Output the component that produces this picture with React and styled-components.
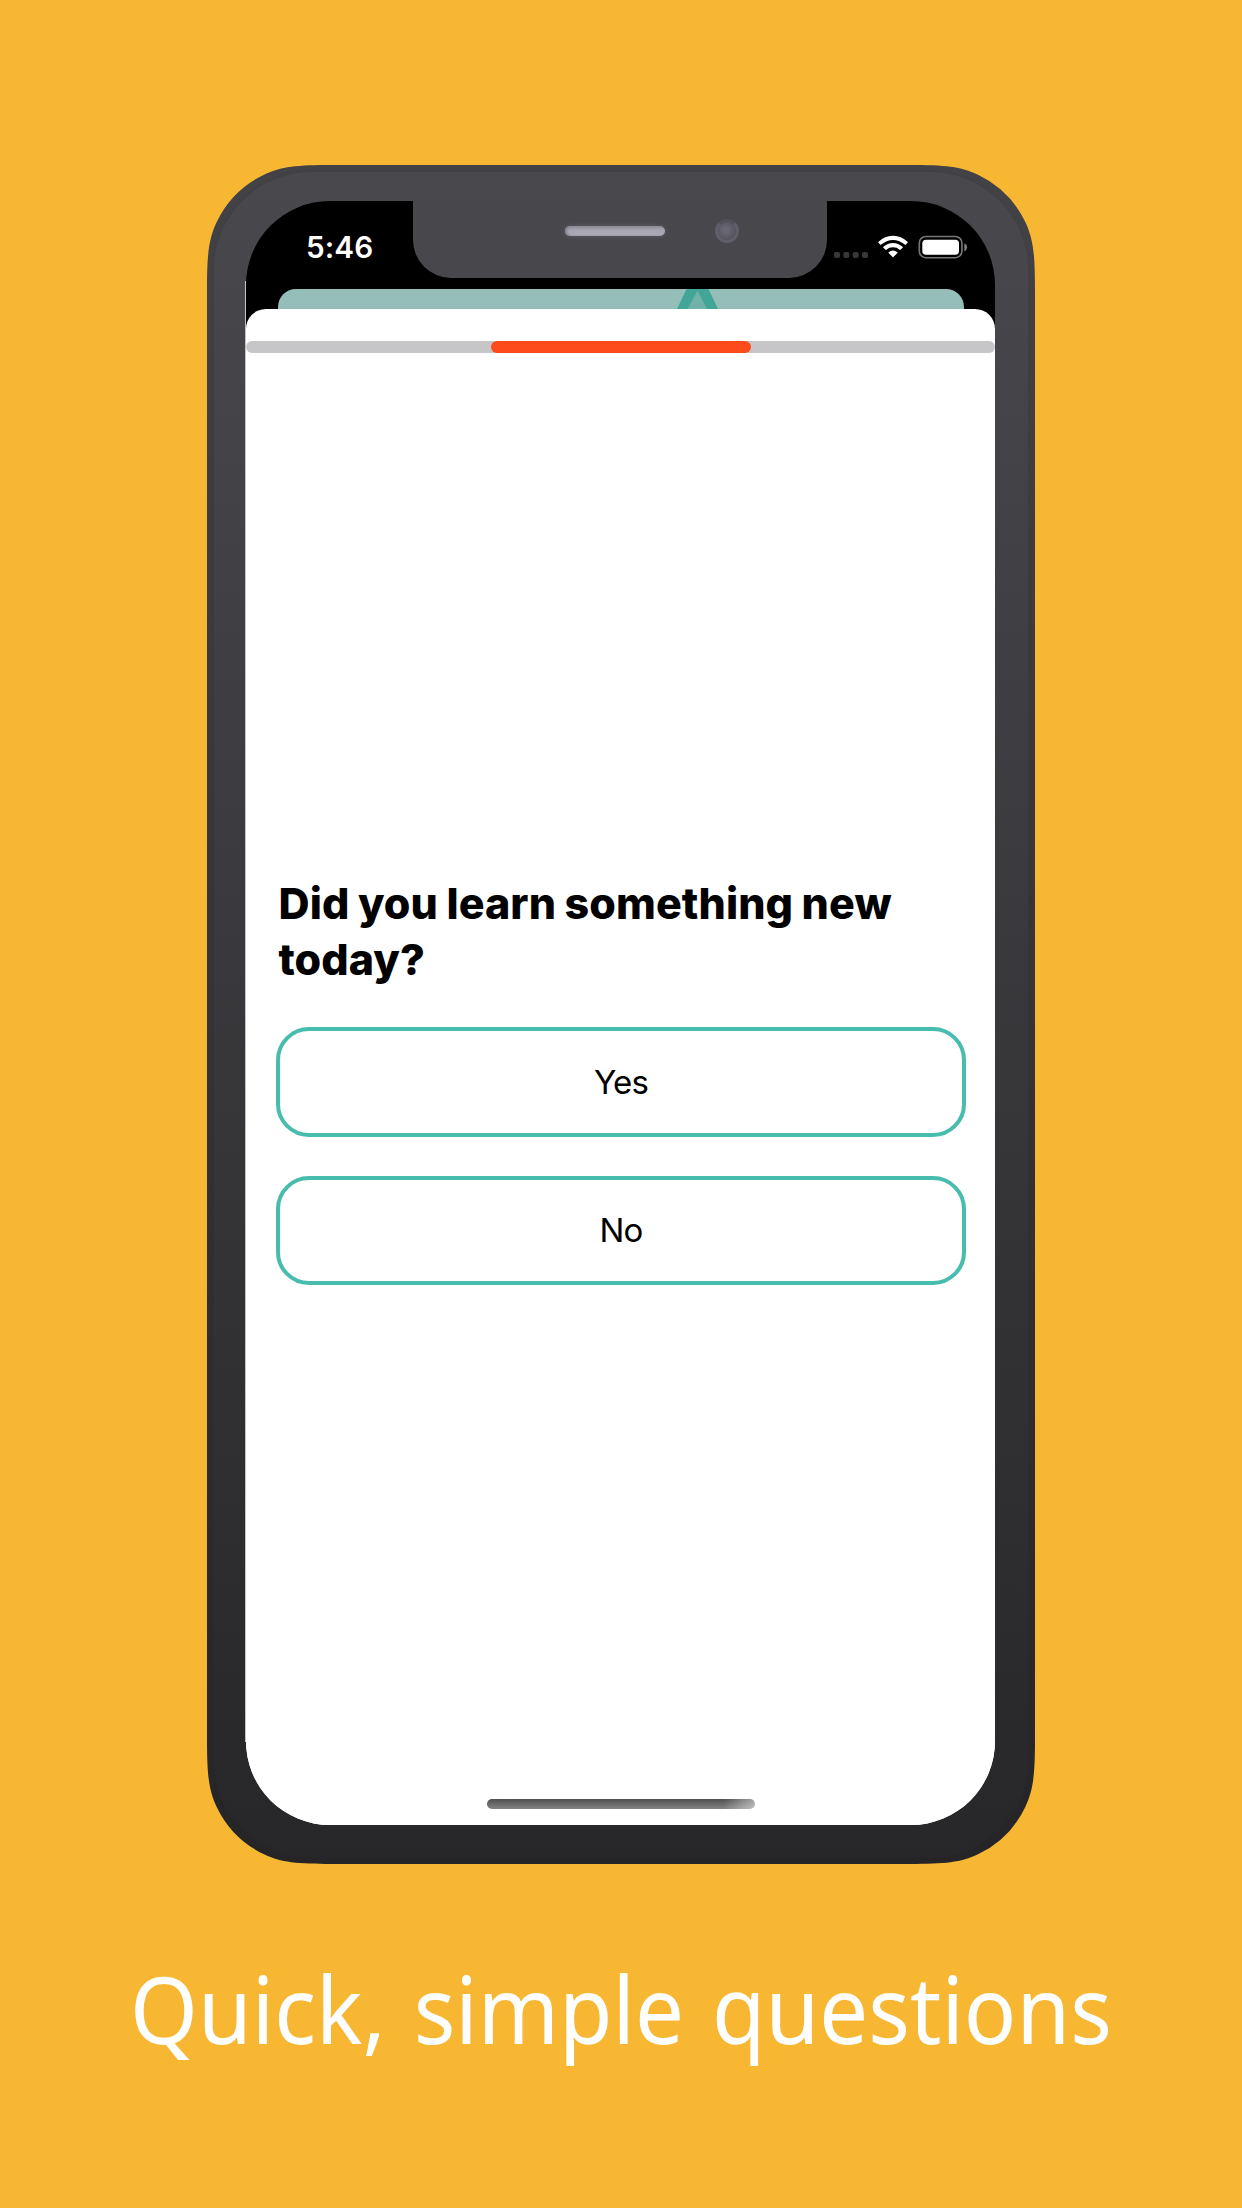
import React from "react";
import styled, { createGlobalStyle } from "styled-components";

const GlobalStyle = createGlobalStyle`
  * { box-sizing: border-box; }
  body { margin: 0; background: #f7b733; }
`;

const Poster = styled.main`
  width: 1242px;
  height: 2208px;
  padding-top: 165px;
  overflow: hidden;
  display: flex;
  flex-direction: column;
  align-items: center;
  background: #f7b733;
  font-family: Inter, "Liberation Sans", sans-serif;
`;

const Phone = styled.section`
  flex: none;
  position: relative;
  width: 828px;
  height: 1699px;
  padding: 36px 40px 39px 39px;
  background: linear-gradient(#434247, #252527);
  clip-path: path("M0 125C0 90 1.5 74.2 9.7 57A100 100 0 0 1 57 9.7C74.2 1.5 90 0 125 0H703C738 0 753.8 1.5 771 9.7A100 100 0 0 1 818.3 57C826.5 74.2 828 90 828 125V1574C828 1609 826.5 1624.8 818.3 1642A100 100 0 0 1 771 1689.3C753.8 1697.5 738 1699 703 1699H125C90 1699 74.2 1697.5 57 1689.3A100 100 0 0 1 9.7 1642C1.5 1624.8 0 1609 0 1574Z");

  &::before {
    content: "";
    position: absolute;
    inset: 7px;
    border-radius: 98px;
    background: linear-gradient(#49484d, #272729);
    box-shadow: 0 0 3px #39383d55;
  }

  &::after {
    content: "";
    position: absolute;
    left: 38px;
    top: 116px;
    bottom: 122px;
    width: 1px;
    background: #c4c4c6;
  }
`;

const Screen = styled.div`
  position: relative;
  height: 100%;
  display: flex;
  flex-direction: column;
  align-items: center;
  overflow: hidden;
  border-radius: 84px;
  background: linear-gradient(#000 0 140px, #fff 140px);
`;

const StatusBar = styled.header`
  width: 100%;
  height: 88px;
  flex: none;
  display: flex;
  justify-content: space-between;
`;

const Time = styled.time`
  width: 167px;
  padding: 28px 0 0 60px;
  color: #fff;
  font-size: 29.7px;
  line-height: 36px;
  font-weight: 570;
  letter-spacing: 0.1px;
`;

const Notch = styled.div`
  width: 414px;
  height: 77px;
  display: flex;
  align-items: flex-start;
  padding: 18px 0 0 152px;
  gap: 50px;
  border-radius: 0 0 38px 38px;
  background: #48474c;
`;

const Speaker = styled.span`
  width: 100px;
  height: 10px;
  margin-top: 7px;
  border-radius: 5px;
  background: linear-gradient(#8d8c96, #a7a6b1 45%, #acabb6);
  box-shadow: 0 0 4px #63626a, inset 2px 0 2px #85848d;
`;

const Camera = styled.span`
  width: 24px;
  height: 24px;
  border: 3px solid #5f5e69;
  border-top-color: #52515a;
  border-radius: 50%;
  background: radial-gradient(circle at 45% 45%, #686774 15%, #565560 65%, #4e4d57);
`;

const StatusIcons = styled.div`
  width: 168px;
  padding: 33px 0 0 6px;
`;

const SheetStack = styled.div`
  width: 100%;
  flex: 1;
  display: flex;
  flex-direction: column;
  align-items: center;
`;

const BackSheet = styled.div`
  width: 686px;
  height: 20px;
  flex: none;
  margin-left: 1px;
  overflow: hidden;
  border-radius: 18px 18px 0 0;
  background: #96beb9;

  svg { display: block; margin-left: 399px; }
`;

const Sheet = styled.div`
  width: 100%;
  flex: 1;
  display: flex;
  flex-direction: column;
  align-items: center;
  padding-top: 32px;
  border-radius: 20px 20px 0 0;
  background: #fff;
`;

const Track = styled.div`
  width: 100%;
  height: 12px;
  flex: none;
  display: flex;
  justify-content: center;
  padding-left: 1px;
  border-radius: 6px;
  background: #c6c6c8;
`;

const Progress = styled.div`
  width: 260px;
  border-radius: 6px;
  background: #fe4b1b;
`;

const Question = styled.h1`
  width: 690px;
  margin: 522px 0 0 1px;
  padding-left: 2.5px;
  color: #000;
  font-size: 43px;
  line-height: 56px;
  font-weight: 800;
  letter-spacing: 0.08px;
  word-spacing: -1px;
  white-space: pre-line;
`;

const Answers = styled.div`
  display: flex;
  flex-direction: column;
  gap: 39px;
  margin: 40px 0 0 1px;
`;

const Answer = styled.button`
  width: 690px;
  height: 109.5px;
  padding: 0;
  border: 4px solid #49bdad;
  border-radius: 33px;
  background: #fff;
  color: #000;
  font: 400 33px/40px Inter, "Liberation Sans", sans-serif;
  letter-spacing: -0.9px;
`;

const HomeIndicator = styled.div`
  width: 268px;
  height: 10px;
  margin: auto 0 16px 1px;
  border-radius: 5px;
  background:
    linear-gradient(100deg, transparent 88%, #ffffff80 100%),
    linear-gradient(#505050, #838383);
`;

const Caption = styled.p`
  margin: 79px 0 0;
  color: #fff;
  font: 400 93px/130px "Noto Sans", "Open Sans", sans-serif;
  word-spacing: 5.8px;
  white-space: nowrap;
  transform: scaleX(0.935);
`;

const Indicators = () => (
  <svg width="136" height="26" viewBox="0 0 136 26" fill="none">
    {[0, 9.3, 18.7, 28].map((x) => (
      <rect key={x} x={x + 1} y="18" width="6" height="6" rx="2" fill="#38383a" />
    ))}
    <path
      d="M45.3 8.6Q45.1 8.2 45.5 7.8Q51.5 1.7 60 1.7T74.5 7.8Q74.9 8.2 74.7 8.6L72.7 10.7Q72.3 11 71.8 10.6Q66.5 5.9 60 5.9T48.2 10.6Q47.7 11 47.3 10.7ZM50.3 13.7Q50 13.3 50.5 12.8Q54.5 9 60 9T69.5 12.8Q70 13.3 69.7 13.7L67.4 15.8Q67 16.1 66.6 15.7Q64 13.3 60 13.3T53.4 15.7Q53 16.1 52.6 15.8ZM55.6 19Q55.3 18.6 55.7 18.2Q57.6 16.5 60 16.5T64.3 18.2Q64.7 18.6 64.4 19L60.4 23.1Q60 23.5 59.6 23.1Z"
      fill="#fff"
    />
    <rect x="86.3" y="2.5" width="42.6" height="21.2" rx="6.5" stroke="#77777a" strokeWidth="1.6" />
    <rect x="89.3" y="5.7" width="36.7" height="15" rx="3.8" fill="#fff" />
    <path d="M131.4 9.2Q134 10.4 134 13.3T131.4 17.4Z" fill="#858588" />
  </svg>
);

const Peak = () => (
  <svg width="42" height="20" viewBox="0 0 42 20">
    <path d="M0 20L9.5 0H31.5L41 20Z" fill="#41a597" />
    <path d="M10.5 20L20.5 1.5L30 20Z" fill="#70b2a9" />
  </svg>
);

export default function App() {
  return (
    <>
      <GlobalStyle />
      <Poster>
        <Phone>
          <Screen>
            <StatusBar>
              <Time>5:46</Time>
              <Notch>
                <Speaker />
                <Camera />
              </Notch>
              <StatusIcons>
                <Indicators />
              </StatusIcons>
            </StatusBar>
            <SheetStack>
              <BackSheet>
                <Peak />
              </BackSheet>
              <Sheet>
                <Track>
                  <Progress />
                </Track>
                <Question>{"Did you learn something new\ntoday?"}</Question>
                <Answers>
                  <Answer>Yes</Answer>
                  <Answer>No</Answer>
                </Answers>
                <HomeIndicator />
              </Sheet>
            </SheetStack>
          </Screen>
        </Phone>
        <Caption>Quick, simple questions</Caption>
      </Poster>
    </>
  );
}
